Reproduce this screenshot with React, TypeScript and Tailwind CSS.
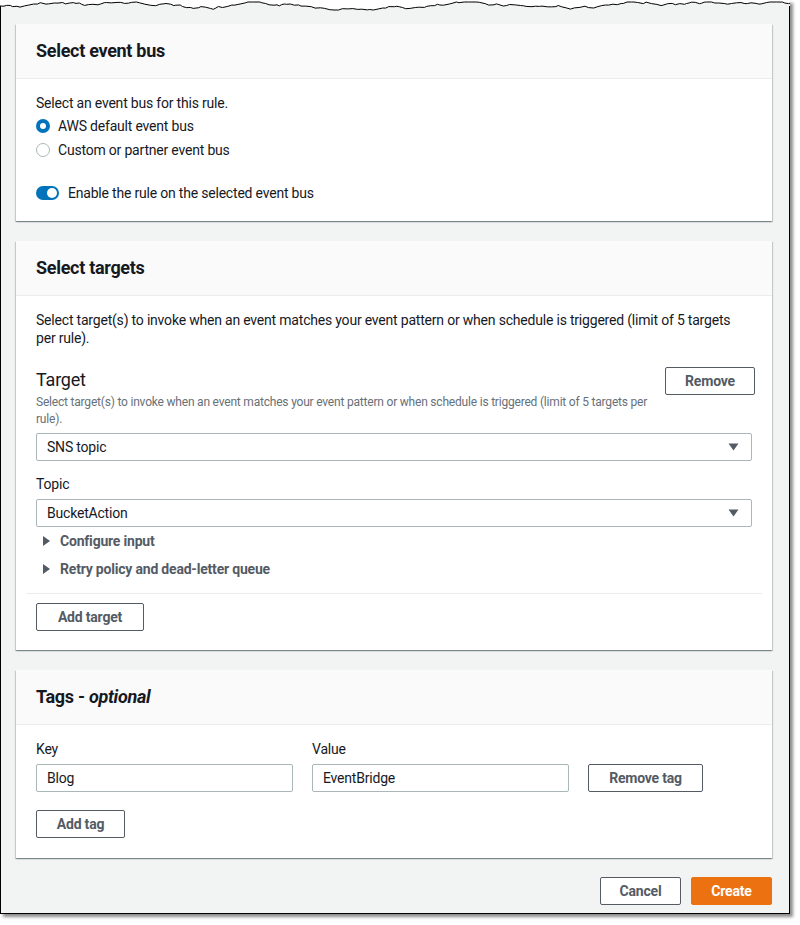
import React from "react";

function jaggedPath(): string {
  let seed = 7;
  const rnd = () => {
    seed = (seed * 9301 + 49297) % 233280;
    return seed / 233280;
  };
  const pts: string[] = [];
  let x = 0;
  let y = 6;
  pts.push(`M0,${y}`);
  while (x < 790) {
    x += 2 + rnd() * 4;
    y += (rnd() - 0.5) * 3;
    if (y < 2) y = 2;
    if (y > 10) y = 10;
    pts.push(`L${x.toFixed(1)},${y.toFixed(1)}`);
  }
  return pts.join(" ");
}
const EDGE = jaggedPath();

const font = { fontFamily: "Roboto, 'Open Sans', Arial, sans-serif" };

function Panel({ title, children }: { title: React.ReactNode; children: React.ReactNode }) {
  return (
    <div className="w-[756px] ml-[15px] bg-white shadow-[0_1px_1px_0_rgba(0,28,36,0.3),1px_1px_1px_0_rgba(0,28,36,0.15),-1px_1px_1px_0_rgba(0,28,36,0.15)]">
      <div className="h-[55px] flex items-center px-5 bg-[#fafafa] border-b border-[#eaeded]">
        <h2 className="text-[18px] leading-[22px] font-bold text-[#16191f] tracking-[-0.3px]">{title}</h2>
      </div>
      {children}
    </div>
  );
}

function Button({ children, className = "" }: { children: React.ReactNode; className?: string }) {
  return (
    <button className={`h-[28px] border border-[#545b64] rounded-[2px] bg-white text-[14px] font-bold text-[#545b64] flex items-center justify-center ${className}`}>
      {children}
    </button>
  );
}

function Caret() {
  return (
    <svg width="11" height="8" viewBox="0 0 11 8">
      <path d="M0.5 0.5 L10.5 0.5 L5.5 7.5 Z" fill="#545b64" />
    </svg>
  );
}

function SelectBox({ value }: { value: string }) {
  return (
    <div className="h-[28px] border border-[#aab7b8] rounded-[2px] flex items-center pl-[10px] pr-[12px] text-[14px] text-[#16191f]">
      <span className="flex-1">{value}</span>
      <Caret />
    </div>
  );
}

function Expand({ label }: { label: string }) {
  return (
    <div className="h-[28px] flex items-center">
      <svg width="7" height="10" viewBox="0 0 7 10" className="ml-[7px] mr-[10px]">
        <path d="M0 0 L7 5 L0 10 Z" fill="#545b64" />
      </svg>
      <span className="text-[14px] font-bold text-[#545b64]">{label}</span>
    </div>
  );
}

export default function App() {
  return (
    <div className="w-[800px] h-[925px] bg-white tracking-[-0.2px]" style={font}>
      <div className="w-[790px] bg-[#f2f3f3] border-b border-black shadow-[3px_3px_3px_rgba(0,0,0,0.45)] relative">
        <svg width="790" height="12" viewBox="0 0 790 12" className="block">
          <rect x="0" y="0" width="790" height="12" fill="#f2f3f3" />
          <path d={`${EDGE} L790,0 L0,0 Z`} fill="#ffffff" />
          <path d={EDGE} fill="none" stroke="#000" strokeWidth="1" />
          <line x1="0.5" y1="6" x2="0.5" y2="12" stroke="#000" />
          <line x1="789.5" y1="6" x2="789.5" y2="12" stroke="#000" />
        </svg>
        <div className="border-l border-r border-black pt-[12px] pb-[8px] flex flex-col">
          <Panel title="Select event bus">
            <div className="px-5 pt-[14px] pb-[18px] text-[14px] text-[#16191f]">
              <div className="leading-[20px]">Select an event bus for this rule.</div>
              <div className="mt-[1px] h-[24px] flex items-center">
                <span className="w-[14px] h-[14px] rounded-full border-[4px] border-[#0073bb] bg-white mr-[8px]" />
                <span>AWS default event bus</span>
              </div>
              <div className="h-[24px] flex items-center">
                <span className="w-[14px] h-[14px] rounded-full border border-[#aab7b8] bg-white mr-[8px]" />
                <span>Custom or partner event bus</span>
              </div>
              <div className="mt-[21px] h-[20px] flex items-center">
                <span className="w-[23px] h-[14px] rounded-full bg-[#0073bb] flex items-center justify-end pr-[2px] mr-[9px]">
                  <span className="w-[10px] h-[10px] rounded-full bg-white" />
                </span>
                <span>Enable the rule on the selected event bus</span>
              </div>
            </div>
          </Panel>

          <div className="h-[20px]" />

          <Panel title="Select targets">
            <div className="px-[10px] pt-[15px] pb-[19px] text-[#16191f]">
              <div className="px-[10px]">
                <p className="text-[14px] leading-[18px]">
                  Select target(s) to invoke when an event matches your event pattern or when schedule is triggered (limit of 5 targets per rule).
                </p>
                <div className="mt-[22px] flex items-start gap-[10px]">
                  <div className="flex-1">
                    <div className="text-[18px] leading-[22px]">Target</div>
                    <div className="mt-[3px] text-[12px] leading-[17px] text-[#687078] pr-[4px]">
                      Select target(s) to invoke when an event matches your event pattern or when schedule is triggered (limit of 5 targets per rule).
                    </div>
                  </div>
                  <Button className="w-[90px] mt-[-2px] mr-[-3px]">Remove</Button>
                </div>
                <div className="mt-[5px]">
                  <SelectBox value="SNS topic" />
                </div>
                <div className="mt-[13px] text-[14px] leading-[20px]">Topic</div>
                <div className="mt-[5px]">
                  <SelectBox value="BucketAction" />
                </div>
                <Expand label="Configure input" />
                <Expand label="Retry policy and dead-letter queue" />
              </div>
              <div className="mt-[10px] border-t border-[#eaeded]" />
              <div className="px-[10px] pt-[9px]">
                <Button className="w-[108px]">Add target</Button>
              </div>
            </div>
          </Panel>

          <div className="h-[20px]" />

          <Panel
            title={
              <>
                Tags - <i>optional</i>
              </>
            }
          >
            <div className="px-5 pt-[14px] pb-[20px] text-[14px] text-[#16191f]">
              <div className="grid grid-cols-[257px_257px_115px] gap-x-[19px]">
                <div className="leading-[20px]">Key</div>
                <div className="leading-[20px]">Value</div>
                <div />
                <div className="mt-[5px] h-[28px] border border-[#aab7b8] rounded-[2px] flex items-center pl-[10px]">Blog</div>
                <div className="mt-[5px] h-[28px] border border-[#aab7b8] rounded-[2px] flex items-center pl-[10px]">EventBridge</div>
                <Button className="mt-[5px]">Remove tag</Button>
              </div>
              <Button className="mt-[18px] w-[89px]">Add tag</Button>
            </div>
          </Panel>

          <div className="mt-[19px] w-[756px] ml-[15px] flex justify-end gap-[10px]">
            <Button className="w-[81px]">Cancel</Button>
            <button className="h-[28px] w-[81px] rounded-[2px] bg-[#ec7211] border border-[#ec7211] text-white text-[14px] font-bold">
              Create
            </button>
          </div>
        </div>
      </div>
    </div>
  );
}
